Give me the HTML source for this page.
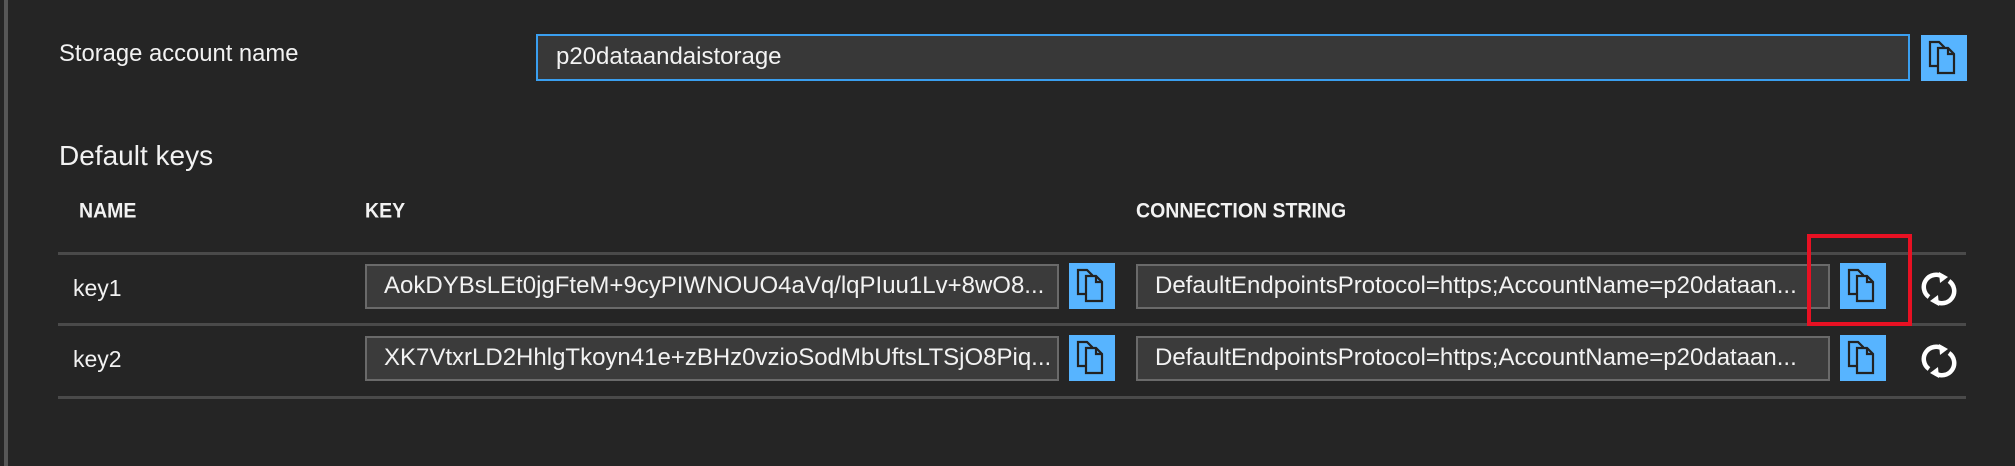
<!DOCTYPE html>
<html><head><meta charset="utf-8">
<style>
html,body{margin:0;padding:0;width:2015px;height:466px;overflow:hidden;background:#252525;font-family:"Segoe UI","Liberation Sans",sans-serif;color:#f2f2f2;}
.abs{position:absolute}
.lb{position:absolute;left:4px;top:0;width:4px;height:466px;background:#575757}
.lbl{font-size:22px;white-space:nowrap}
.hdr{font-size:19.5px;font-weight:bold;white-space:nowrap;transform:scaleY(1.1);transform-origin:left top}
.inp{position:absolute;box-sizing:border-box;background:#3b3b3b;border:2px solid #6a6a6a;font-size:24px;white-space:nowrap;overflow:hidden;padding-left:17px;line-height:40px}
.btn{position:absolute;width:46px;height:46px;background:#57b4ff}
.line{position:absolute;left:58px;width:1908px;height:3px;background:#4a4a4a}
</style></head><body>
<div class="lb"></div>
<div class="abs lbl" style="left:59px;top:40px;font-size:23.8px">Storage account name</div>
<div class="inp" style="left:536px;top:34px;width:1374px;height:47px;border-color:#3a9ff0;background:#383838;padding-left:18px;line-height:42px;font-size:24px">p20dataandaistorage</div>
<div class="btn" style="left:1921px;top:35px"><svg width="46" height="46"><g fill="none" stroke="#222" stroke-width="2.2"><path d="M9 7H18L23 12V31H9Z"/><path d="M17 13H27L33 19V38H17Z" fill="#57b4ff"/><path d="M27 13V19H33"/></g></svg></div>
<div class="abs" style="left:59px;top:140px;font-size:28px">Default keys</div>
<div class="abs hdr" style="left:79px;top:199px">NAME</div>
<div class="abs hdr" style="left:365px;top:199px">KEY</div>
<div class="abs hdr" style="left:1136px;top:199px">CONNECTION STRING</div>
<div class="line" style="top:252px"></div>
<div class="line" style="top:323px"></div>
<div class="line" style="top:396px"></div>

<div class="abs lbl" style="left:73px;top:275px;font-size:23px">key1</div>
<div class="inp" style="left:365px;top:264px;width:694px;height:45px">AokDYBsLEt0jgFteM+9cyPIWNOUO4aVq/lqPIuu1Lv+8wO8...</div>
<div class="btn" style="left:1069px;top:263px"><svg width="46" height="46"><g fill="none" stroke="#222" stroke-width="2.2"><path d="M9 7H18L23 12V31H9Z"/><path d="M17 13H27L33 19V38H17Z" fill="#57b4ff"/><path d="M27 13V19H33"/></g></svg></div>
<div class="inp" style="left:1136px;top:264px;width:694px;height:45px">DefaultEndpointsProtocol=https;AccountName=p20dataan...</div>
<div class="btn" style="left:1840px;top:263px"><svg width="46" height="46"><g fill="none" stroke="#222" stroke-width="2.2"><path d="M9 7H18L23 12V31H9Z"/><path d="M17 13H27L33 19V38H17Z" fill="#57b4ff"/><path d="M27 13V19H33"/></g></svg></div>
<svg class="abs" style="left:1921px;top:271px" width="36" height="36" viewBox="0 0 36 36"><g fill="none" stroke="#fff" stroke-width="4.5"><path d="M8 26A12 12 0 0 1 22 6"/><path d="M28 10A12 12 0 0 1 14 30"/></g><path d="M18 1L27 6L19 12Z" fill="#fff"/><path d="M18 35L9 30L17 24Z" fill="#fff"/></svg>

<div class="abs lbl" style="left:73px;top:346px;font-size:23px">key2</div>
<div class="inp" style="left:365px;top:336px;width:694px;height:45px">XK7VtxrLD2HhlgTkoyn41e+zBHz0vzioSodMbUftsLTSjO8Piq...</div>
<div class="btn" style="left:1069px;top:335px"><svg width="46" height="46"><g fill="none" stroke="#222" stroke-width="2.2"><path d="M9 7H18L23 12V31H9Z"/><path d="M17 13H27L33 19V38H17Z" fill="#57b4ff"/><path d="M27 13V19H33"/></g></svg></div>
<div class="inp" style="left:1136px;top:336px;width:694px;height:45px">DefaultEndpointsProtocol=https;AccountName=p20dataan...</div>
<div class="btn" style="left:1840px;top:335px"><svg width="46" height="46"><g fill="none" stroke="#222" stroke-width="2.2"><path d="M9 7H18L23 12V31H9Z"/><path d="M17 13H27L33 19V38H17Z" fill="#57b4ff"/><path d="M27 13V19H33"/></g></svg></div>
<svg class="abs" style="left:1921px;top:343px" width="36" height="36" viewBox="0 0 36 36"><g fill="none" stroke="#fff" stroke-width="4.5"><path d="M8 26A12 12 0 0 1 22 6"/><path d="M28 10A12 12 0 0 1 14 30"/></g><path d="M18 1L27 6L19 12Z" fill="#fff"/><path d="M18 35L9 30L17 24Z" fill="#fff"/></svg>

<div class="abs" style="left:1807px;top:234px;width:97px;height:84px;border:4px solid #e81123"></div>
</body></html>
